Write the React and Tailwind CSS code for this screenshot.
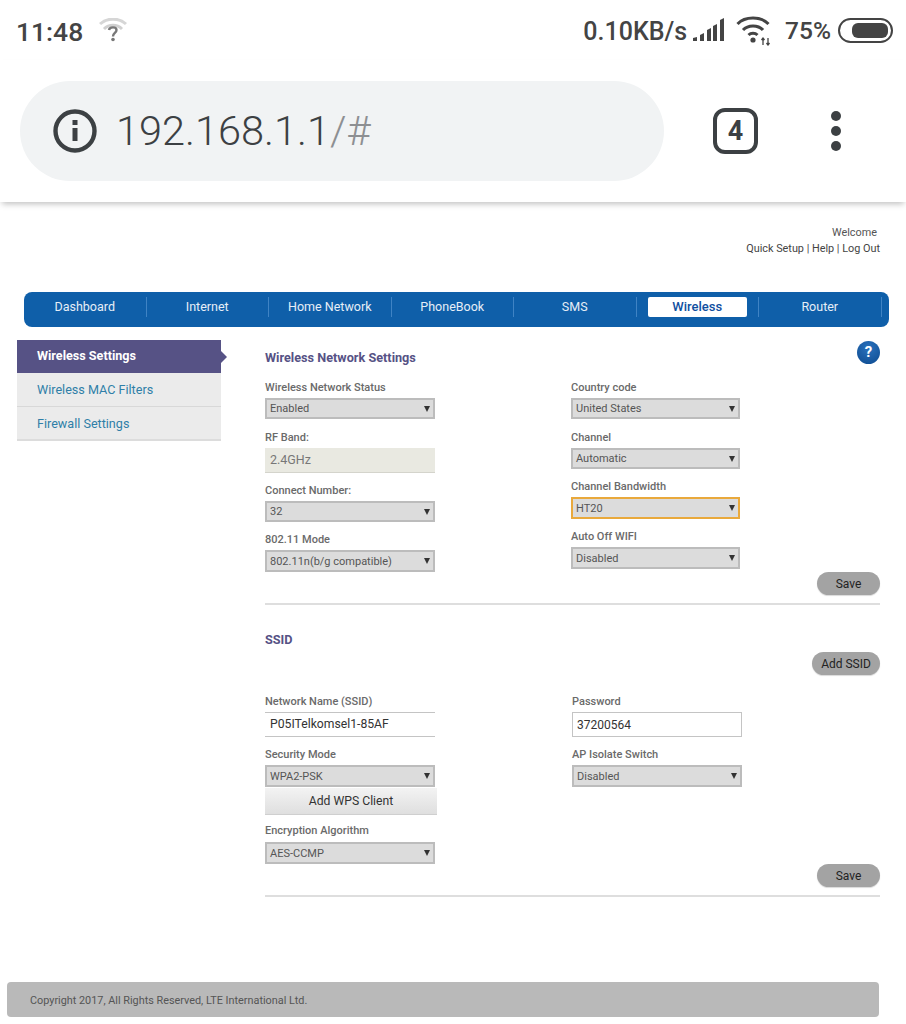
import React from 'react';

const tabs = ['Dashboard', 'Internet', 'Home Network', 'PhoneBook', 'SMS', 'Wireless', 'Router'];

const Label = ({ children, className = '' }) => (
  <div className={`h-[21px] pt-[2px] flex items-center text-[11px] font-medium text-[#6a6a6a] whitespace-nowrap ${className}`}>{children}</div>
);

const Select = ({ value, focus, className = 'h-[22px]', width = 'w-[170px]' }) => (
  <div
    className={`${width} ${className} flex items-center justify-between pl-[3px] pr-[3px] bg-[#dcdcdc] border-2 text-[11px] text-[#555] ${
      focus ? 'border-[#e9a93c]' : 'border-[#bcbcbc]'
    }`}
  >
    <span className="pt-[2px]">{value}</span>
    <span className="w-0 h-0 border-x-[3.5px] border-x-transparent border-t-[6px] border-t-[#333]" />
  </div>
);

const PillButton = ({ children, className = '' }) => (
  <button className={`h-[23px] rounded-full bg-[#a3a3a3] text-[12px] text-[#222] shadow-[0_1px_1px_rgba(0,0,0,0.15)] ${className}`}>
    {children}
  </button>
);

const StatusBar = () => (
  <div className="h-[60px] flex items-center justify-between pl-[16px] pr-[13px] text-[#444]">
    <div className="flex items-center gap-[16px]">
      <span className="pt-[3px] text-[26.5px] font-medium">11:48</span>
      <svg width="30" height="24" viewBox="0 0 30 24" fill="none">
        <path d="M1 6 C8 -0.5 20 -0.5 27 6" stroke="#d6d6d6" strokeWidth="3" />
        <path d="M5 11 C10 6 18 6 23 11" stroke="#d0d0d0" strokeWidth="3" />
        <path d="M10 12 C10.5 8.5 17.5 8.5 17.5 12 C17.5 15 14 15 14 18.5" stroke="#777" strokeWidth="2.4" />
        <circle cx="14" cy="21.5" r="1.8" fill="#777" />
      </svg>
    </div>
    <div className="flex items-center">
      <span className="pt-[3px] text-[25px] font-medium">0.10KB/s</span>
      <svg className="ml-[5px]" width="33" height="24" viewBox="0 0 33 24" fill="#444">
        <path d="M1 20 L5 19 V23 H1 Z" />
        <path d="M8 17 L12 15 V23 H8 Z" />
        <path d="M15 12 L19 10 V23 H15 Z" />
        <path d="M21 8 L25 6 V23 H21 Z" />
        <path d="M28 2 L32 0 V23 H28 Z" />
      </svg>
      <svg className="ml-[11px]" width="36" height="32" viewBox="0 0 36 32" fill="none" stroke="#444" strokeWidth="3">
        <path d="M1.5 10 C9 2 25 2 32.5 10" />
        <path d="M7 16 C12 10.5 22 10.5 27 16" />
        <path d="M12.5 21 C15 18.5 19 18.5 21.5 21" />
        <circle cx="17" cy="26" r="2.6" fill="#444" stroke="none" />
        <path d="M27 24 V31 M25.5 26 L27 24 L28.5 26 M32 24 V31 M30.5 29 L32 31 L33.5 29" strokeWidth="1.3" />
      </svg>
      <span className="ml-[13px] pt-[3px] text-[24.5px] font-medium">75%</span>
      <div className="ml-[7px] w-[55px] h-[25px] rounded-full border-2 border-[#444] p-[3px] pr-[3px] flex justify-end">
        <div className="w-[36px] h-full rounded-[6px] bg-[#444]" />
      </div>
    </div>
  </div>
);

const UrlBar = () => (
  <div className="relative h-[142px] pt-[21px] pl-[20px] flex items-start bg-white shadow-[0_4px_6px_-2px_rgba(0,0,0,0.25)]">
    <div className="w-[644px] h-[100px] rounded-full bg-[#f1f3f4] flex items-center pl-[33px]">
      <svg width="44" height="44" viewBox="0 0 44 44" fill="none">
        <circle cx="22" cy="22" r="19.5" stroke="#3c4043" strokeWidth="4.4" />
        <rect x="19.5" y="19" width="5" height="13" fill="#3c4043" />
        <rect x="19.5" y="11" width="5" height="5" fill="#3c4043" />
      </svg>
      <span className="ml-[19px] text-[41.5px] text-[#3c4043] font-light">
        192.168.1.1<span className="text-[#8d8f92]">/#</span>
      </span>
    </div>
    <div className="ml-[49px] mt-[27px] w-[45px] h-[46px] rounded-[12px] border-[4px] border-[#3c4043] flex items-center justify-center text-[27px] font-bold text-[#3c4043]">
      4
    </div>
    <div className="ml-[73px] mt-[30px] flex flex-col gap-[5px]">
      <span className="w-[10px] h-[10px] rounded-full bg-[#3c4043]" />
      <span className="w-[10px] h-[10px] rounded-full bg-[#3c4043]" />
      <span className="w-[10px] h-[10px] rounded-full bg-[#3c4043]" />
    </div>
  </div>
);

const TopLinks = () => (
  <div className="h-[90px] pt-[23px] pr-[26px] flex flex-col items-end text-[10.85px] leading-[16px] text-[#444]">
    <div className="pr-[3px] text-[#555]">Welcome</div>
    <div>Quick Setup | Help | Log Out</div>
  </div>
);

const NavBar = () => (
  <div className="ml-[24px] w-[865px] h-[35px] pt-[5px] rounded-lg bg-[#0f5fa9] flex items-start">
    {tabs.map((tab) => (
      <div key={tab} className="w-[122.5px] h-[20px] flex items-center justify-center border-r border-[#3f83c4] px-[11px]">
        <span
          className={
            tab === 'Wireless'
              ? 'w-full h-[20px] rounded-[2px] bg-white text-center leading-[20px] text-[13px] font-medium text-[#0f4f9f]'
              : 'text-[12.5px] text-[#e6eef7]'
          }
        >
          {tab}
        </span>
      </div>
    ))}
  </div>
);

const Sidebar = () => (
  <div className="w-[204px] text-[12.6px]">
    <div className="relative h-[33px] flex items-center pb-px pl-[20px] bg-[#565285] font-bold text-white">
      Wireless Settings
      <span className="absolute right-[-6px] top-[11px] w-0 h-0 border-y-[6px] border-y-transparent border-l-[6px] border-l-[#565285]" />
    </div>
    <div className="h-[34px] flex items-center pt-[2px] pl-[20px] bg-[#ebebeb] border-b border-[#d8d8d8] text-[#2f7fa8]">Wireless MAC Filters</div>
    <div className="h-[34px] flex items-center pt-[3px] pl-[20px] bg-[#ebebeb] border-b-2 border-[#dcdcdc] text-[#2f7fa8]">Firewall Settings</div>
  </div>
);

const Heading = ({ children, className = '' }) => (
  <div className={`text-[12.7px] font-bold text-[#565285] ${className}`}>{children}</div>
);

const WirelessSection = () => (
  <>
    <div className="h-[37px] flex items-start justify-between">
      <Heading className="mt-[8px]">Wireless Network Settings</Heading>
      <div className="mt-px w-[23px] h-[23px] rounded-full bg-[radial-gradient(circle_at_50%_30%,#2a72bd,#0d4a8f)] flex items-center justify-center text-[15px] font-bold text-white">
        ?
      </div>
    </div>
    <div className="flex">
      <div className="w-[306px]">
        <Label>Wireless Network Status</Label>
        <Select value="Enabled" className="h-[21px]" />
        <Label className="mt-[8px]">RF Band:</Label>
        <div className="w-[170px] h-[25px] flex items-center pl-[5px] bg-[#e9e9e1] border-b border-[#d4d4cc] text-[12.5px] text-[#777]">2.4GHz</div>
        <Label className="mt-[7px]">Connect Number:</Label>
        <Select value="32" className="h-[21px]" />
        <Label className="mt-[7px]">802.11 Mode</Label>
        <Select value="802.11n(b/g compatible)" />
      </div>
      <div>
        <Label>Country code</Label>
        <Select value="United States" className="h-[21px]" width="w-[169px]" />
        <Label className="mt-[8px]">Channel</Label>
        <Select value="Automatic" className="h-[21px]" width="w-[169px]" />
        <Label className="mt-[7px]">Channel Bandwidth</Label>
        <Select value="HT20" focus width="w-[169px]" />
        <Label className="mt-[7px]">Auto Off WIFI</Label>
        <Select value="Disabled" width="w-[169px]" />
      </div>
    </div>
    <div className="flex justify-end">
      <PillButton className="w-[63px]">Save</PillButton>
    </div>
    <div className="mt-[8px] border-t-2 border-[#dedede]" />
  </>
);

const SsidSection = () => (
  <>
    <Heading className="mt-[25px] h-[20px] leading-[20px]">SSID</Heading>
    <div className="mt-[2px] flex justify-end">
      <PillButton className="w-[68px]">Add SSID</PillButton>
    </div>
    <div className="mt-[16px] flex">
      <div className="w-[307px]">
        <Label>Network Name (SSID)</Label>
        <div className="w-[170px] h-[25px] flex items-center pl-[5px] border-y border-[#c4c4c4] text-[12.2px] text-[#333]">P05ITelkomsel1-85AF</div>
        <Label className="mt-[7px]">Security Mode</Label>
        <Select value="WPA2-PSK" />
        <button className="block w-[172px] h-[27px] mt-px bg-linear-to-b from-[#f3f3f3] to-[#dfdfdf] border-b border-[#cfcfcf] text-[12.2px] text-[#333]">
          Add WPS Client
        </button>
        <Label className="mt-[5px]">Encryption Algorithm</Label>
        <Select value="AES-CCMP" className="h-[22px] mt-px" />
      </div>
      <div>
        <Label>Password</Label>
        <div className="w-[170px] h-[25px] flex items-center pl-[4px] border border-[#c4c4c4] text-[12px] text-[#333]">37200564</div>
        <Label className="mt-[7px]">AP Isolate Switch</Label>
        <Select value="Disabled" />
      </div>
    </div>
    <div className="flex justify-end">
      <PillButton className="w-[63px]">Save</PillButton>
    </div>
    <div className="mt-[8px] border-t-2 border-[#dedede]" />
  </>
);

const App = () => (
  <div className="w-[906px] h-[1024px] overflow-hidden bg-white font-['Roboto',sans-serif]">
    <StatusBar />
    <UrlBar />
    <TopLinks />
    <NavBar />
    <div className="mt-[13px] pl-[17px] flex">
      <Sidebar />
      <div className="ml-[44px] w-[615px]">
        <WirelessSection />
        <SsidSection />
      </div>
    </div>
    <div className="mt-[85px] ml-[7px] w-[872px] h-[35px] pt-[3px] rounded-[4px] bg-[#b9b9b9] flex items-center pl-[23px] text-[10.85px] text-[#555]">
      Copyright 2017, All Rights Reserved, LTE International Ltd.
    </div>
  </div>
);

export default App;
